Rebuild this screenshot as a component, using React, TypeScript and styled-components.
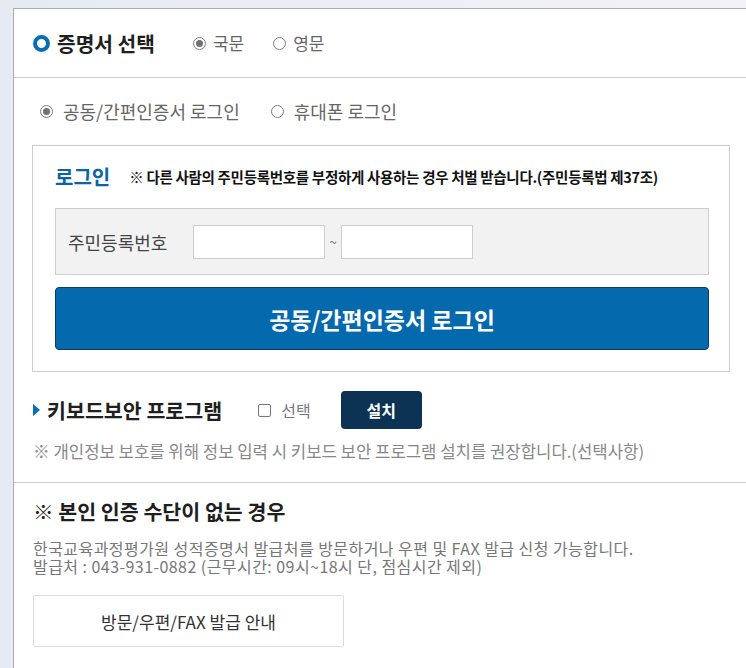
import styled, { createGlobalStyle } from 'styled-components';

const GlobalStyle = createGlobalStyle`
    html, body {
        margin: 0;
        padding: 0;
    }
    body {
        background: linear-gradient(90deg, #e6eaf2 0%, #f1f3f8 100%);
        font-family: 'Noto Sans CJK KR', 'Noto Sans', sans-serif;
        overflow: hidden;
    }
`;

const Panel = styled.div`
    margin: 8px 0 0 13px;
    min-height: 660px;
    background: #FFFFFF;
    border-top: 1px solid #a9acb1;
    border-left: 1px solid #a9acb1;
`;

const Header = styled.div`
    display: flex;
    align-items: center;
    height: 68px;
    padding-left: 19px;
    border-bottom: 1px solid #cfcfcf;
`;

const Ring = styled.span`
    width: 9px;
    height: 9px;
    border: 4px solid #0a6cb2;
    border-radius: 50%;
    margin-right: 7px;
`;

const Title = styled.h2<{ $size?: number }>`
    margin: 0;
    font-size: ${p => p.$size || 20.3}px;
    font-weight: 700;
    color: #1f1f1f;
    line-height: 26px;
`;

const RadioGroup = styled.div<{ $gap: number; $left: number }>`
    display: flex;
    align-items: center;
    gap: ${p => p.$gap}px;
    margin-left: ${p => p.$left}px;
`;

const RadioLabel = styled.label<{ $size: number }>`
    display: flex;
    align-items: center;
    gap: ${p => (p.$size > 17 ? 10 : 7)}px;
    font-size: ${p => p.$size}px;
    color: #666;
    line-height: 22px;
`;

const RadioMark = styled.span<{ $checked?: boolean }>`
    position: relative;
    width: 11px;
    height: 11px;
    border: 1px solid #7c7c7c;
    border-radius: 50%;
    background: #fff;

    &::after {
        content: '';
        display: ${p => (p.$checked ? 'block' : 'none')};
        position: absolute;
        left: 2px;
        top: 2px;
        width: 7px;
        height: 7px;
        border-radius: 50%;
        background: #727272;
    }
`;

const LoginSection = styled.div`
    padding: 22px 16px 0 18px;
`;

const LoginTypeRow = styled(RadioGroup)`
    padding-left: 8px;
    height: 22px;
    margin-bottom: 23px;
`;

const LoginBox = styled.div`
    border: 1px solid #cdcdcd;
    padding: 0 20px 21px 22px;
`;

const LoginHead = styled.div`
    display: flex;
    align-items: center;
    height: 62px;
    gap: 19px;
`;

const LoginTitle = styled.span`
    font-size: 20px;
    font-weight: 700;
    color: #0a64a8;
    line-height: 26px;
`;

const Warning = styled.span`
    font-size: 14.5px;
    font-weight: 700;
    color: #111;
    letter-spacing: -0.3px;
    line-height: 20px;
`;

const FieldBox = styled.div`
    display: flex;
    align-items: center;
    height: 65px;
    padding-left: 12px;
    background: #f2f2f2;
    border: 1px solid #cdcdcd;
`;

const FieldLabel = styled.span`
    font-size: 18px;
    color: #444;
    width: 125px;
    line-height: 24px;
`;

const Input = styled.input`
    box-sizing: border-box;
    width: 132px;
    height: 34px;
    border: 1px solid #cdcdcd;
    background: #fff;
    outline: none;
`;

const Tilde = styled.span`
    width: 16px;
    text-align: center;
    font-size: 13px;
    color: #777;
`;

const PrimaryButton = styled.button`
    box-sizing: border-box;
    width: 100%;
    height: 63px;
    margin-top: 12px;
    background: #0569ae;
    border: 1px solid #0b3c62;
    border-radius: 4px;
    color: #fff;
    font-family: inherit;
    font-size: 23px;
    font-weight: 700;
    line-height: 30px;
`;

const KeyboardSection = styled.div`
    padding: 19px 0 21px 19px;
    border-bottom: 1px solid #cfcfcf;
`;

const KeyboardRow = styled.div`
    display: flex;
    align-items: center;
    height: 38px;
`;

const Triangle = styled.span`
    width: 0;
    height: 0;
    border-top: 6px solid transparent;
    border-bottom: 6px solid transparent;
    border-left: 7px solid #0a6cb2;
    margin-right: 7px;
`;

const CheckLabel = styled.label`
    display: flex;
    align-items: center;
    gap: 10px;
    margin-left: 36px;
    font-size: 16px;
    color: #777;
    line-height: 22px;
`;

const CheckMark = styled.span`
    width: 11px;
    height: 11px;
    border: 1px solid #777;
    border-radius: 2px;
`;

const InstallButton = styled.button`
    width: 81px;
    height: 38px;
    margin-left: 30px;
    background: #0c3354;
    border: none;
    border-radius: 4px;
    color: #fff;
    font-family: inherit;
    font-size: 16px;
    font-weight: 700;
`;

const Note = styled.p`
    margin: 12px 0 0;
    font-size: 16.7px;
    line-height: 20px;
    color: #888;
`;

const NoAuthSection = styled.div`
    padding: 15px 0 0 19px;
`;

const Desc = styled.p`
    margin: 15px 0 0;
    font-size: 16px;
    line-height: 18px;
    color: #777;
    letter-spacing: 0.45px;
`;

const GuideButton = styled.button`
    width: 311px;
    height: 52px;
    margin-top: 20px;
    background: #fff;
    border: 1px solid #dcdcdc;
    border-radius: 2px;
    font-family: inherit;
    font-size: 17px;
    color: #333;
`;

export default function App() {
    return (
        <>
            <GlobalStyle />
            <Panel>
                <Header>
                    <Ring />
                    <Title>증명서 선택</Title>
                    <RadioGroup $gap={29} $left={38}>
                        <RadioLabel $size={17}><RadioMark $checked />국문</RadioLabel>
                        <RadioLabel $size={17}><RadioMark />영문</RadioLabel>
                    </RadioGroup>
                </Header>

                <LoginSection>
                    <LoginTypeRow $gap={31} $left={0}>
                        <RadioLabel $size={18}><RadioMark $checked />공동/간편인증서 로그인</RadioLabel>
                        <RadioLabel $size={18}><RadioMark />휴대폰 로그인</RadioLabel>
                    </LoginTypeRow>

                    <LoginBox>
                        <LoginHead>
                            <LoginTitle>로그인</LoginTitle>
                            <Warning>※ 다른 사람의 주민등록번호를 부정하게 사용하는 경우 처벌 받습니다.(주민등록법 제37조)</Warning>
                        </LoginHead>
                        <FieldBox>
                            <FieldLabel>주민등록번호</FieldLabel>
                            <Input />
                            <Tilde>~</Tilde>
                            <Input />
                        </FieldBox>
                        <PrimaryButton>공동/간편인증서 로그인</PrimaryButton>
                    </LoginBox>
                </LoginSection>

                <KeyboardSection>
                    <KeyboardRow>
                        <Triangle />
                        <Title $size={20.6}>키보드보안 프로그램</Title>
                        <CheckLabel><CheckMark />선택</CheckLabel>
                        <InstallButton>설치</InstallButton>
                    </KeyboardRow>
                    <Note>※ 개인정보 보호를 위해 정보 입력 시 키보드 보안 프로그램 설치를 권장합니다.(선택사항)</Note>
                </KeyboardSection>

                <NoAuthSection>
                    <Title $size={20.6}>※ 본인 인증 수단이 없는 경우</Title>
                    <Desc>
                        한국교육과정평가원 성적증명서 발급처를 방문하거나 우편 및 FAX 발급 신청 가능합니다.
                        <br />
                        발급처 : 043-931-0882 (근무시간: 09시~18시 단, 점심시간 제외)
                    </Desc>
                    <GuideButton>방문/우편/FAX 발급 안내</GuideButton>
                </NoAuthSection>
            </Panel>
        </>
    );
}
